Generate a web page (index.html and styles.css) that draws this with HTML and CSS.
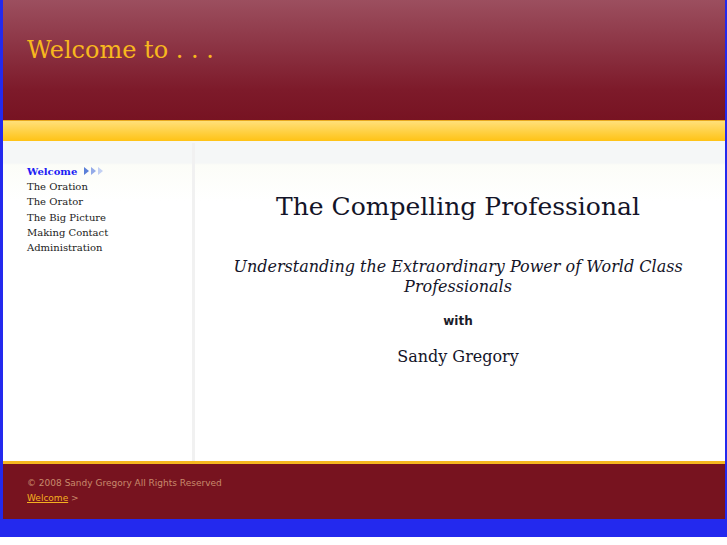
FILE: index.html
```html
<!DOCTYPE html>
<html lang="en">
<head>
    <meta charset="UTF-8">
    <meta name="viewport" content="width=device-width, initial-scale=1.0">
    <title>The Compelling Professional</title>
    <link rel="stylesheet" href="styles.css">
</head>
<body>
    <div class="page">
        <div class="header">
            <h1>Welcome to . . .</h1>
        </div>
        <div class="band"></div>

        <div class="main">
            <div class="sidebar">
                <ul class="nav">
                    <li class="current"><a href="#">Welcome</a>
                        <span class="arrows"><i></i><i></i><i></i></span>
                    </li>
                    <li><a href="#">The Oration</a></li>
                    <li><a href="#">The Orator</a></li>
                    <li><a href="#">The Big Picture</a></li>
                    <li><a href="#">Making Contact</a></li>
                    <li><a href="#">Administration</a></li>
                </ul>
            </div>
            <div class="content">
                <h2>The Compelling Professional</h2>
                <p class="subtitle">Understanding the Extraordinary Power of World Class Professionals</p>
                <p class="with">with</p>
                <p class="author">Sandy Gregory</p>
            </div>
        </div>

        <div class="footer">
            <p>&copy; 2008 Sandy Gregory All Rights Reserved</p>
            <p class="crumbs"><a href="#">Welcome</a> &gt;</p>
        </div>
    </div>
</body>
</html>
```

FILE: styles.css
```css
html {
    background: #fff;
}
body {
    margin: 0;
    padding: 0 2px 18px 3px;
    background: #2329ee;
    font-family: "DejaVu Serif", serif;
}
.page {
    background: #fff;
}
.header {
    height: 120px;
    background: linear-gradient(#9c4f5f, #7d1a2a 75%, #771322);
    display: flex;
    align-items: center;
    padding-left: 24px;
}
.header h1 {
    margin: 0 0 20px 0;
    font-weight: normal;
    font-size: 24px;
    color: #f7b81e;
}
.band {
    height: 20px;
    border-top: 1px solid #e8a820;
    background: linear-gradient(#ffe07a, #ffc315);
}
.main {
    display: flex;
    height: 320px;
    background: linear-gradient(#f5f7f7 22px, #fcfdf8 24px, #fff 60px);
}
.sidebar {
    width: 189px;
    border-right: 3px solid #f1f1f1;
    margin-top: 2px;
}
.nav {
    list-style: none;
    margin: 21px 0 0 0;
    padding: 0 0 0 24px;
    font-size: 10px;
    line-height: 15.2px;
}
.nav a {
    color: #222;
    text-decoration: none;
}
.nav .current a {
    color: #1d1df5;
    font-weight: bold;
}
.arrows {
    display: inline-flex;
    gap: 2px;
    margin-left: 4px;
}
.arrows i {
    width: 0;
    height: 0;
    border-top: 4px solid transparent;
    border-bottom: 4px solid transparent;
    border-left: 5px solid #5b7fd8;
}
.arrows i:nth-child(2) {
    border-left-color: #93aae8;
}
.arrows i:nth-child(3) {
    border-left-color: #c3d0f3;
}
.content {
    flex: 1;
    text-align: center;
    color: #141428;
    padding: 0 8px 0 4px;
}
.content h2 {
    margin: 51px 0 0 0;
    font-weight: normal;
    font-size: 25px;
    line-height: 30px;
}
.subtitle {
    font-style: italic;
    font-size: 16px;
    line-height: 20px;
    margin: 35px 30px 0 30px;
}
.with {
    font-family: "DejaVu Sans", sans-serif;
    font-weight: bold;
    font-size: 12px;
    line-height: 16px;
    color: #1c1c2a;
    margin: 16px 0 0 0;
}
.author {
    font-size: 16px;
    line-height: 22px;
    margin: 17px 0 0 0;
}
.footer {
    border-top: 3px solid #f5b820;
    background: #77131f;
    height: 58px;
    padding: 12px 24px 0 24px;
    box-sizing: border-box;
    font-family: "DejaVu Sans", sans-serif;
    font-size: 9px;
    color: #c88a6c;
}
.footer p {
    margin: 0;
    line-height: 15px;
}
.footer a {
    color: #f5b020;
}
```
